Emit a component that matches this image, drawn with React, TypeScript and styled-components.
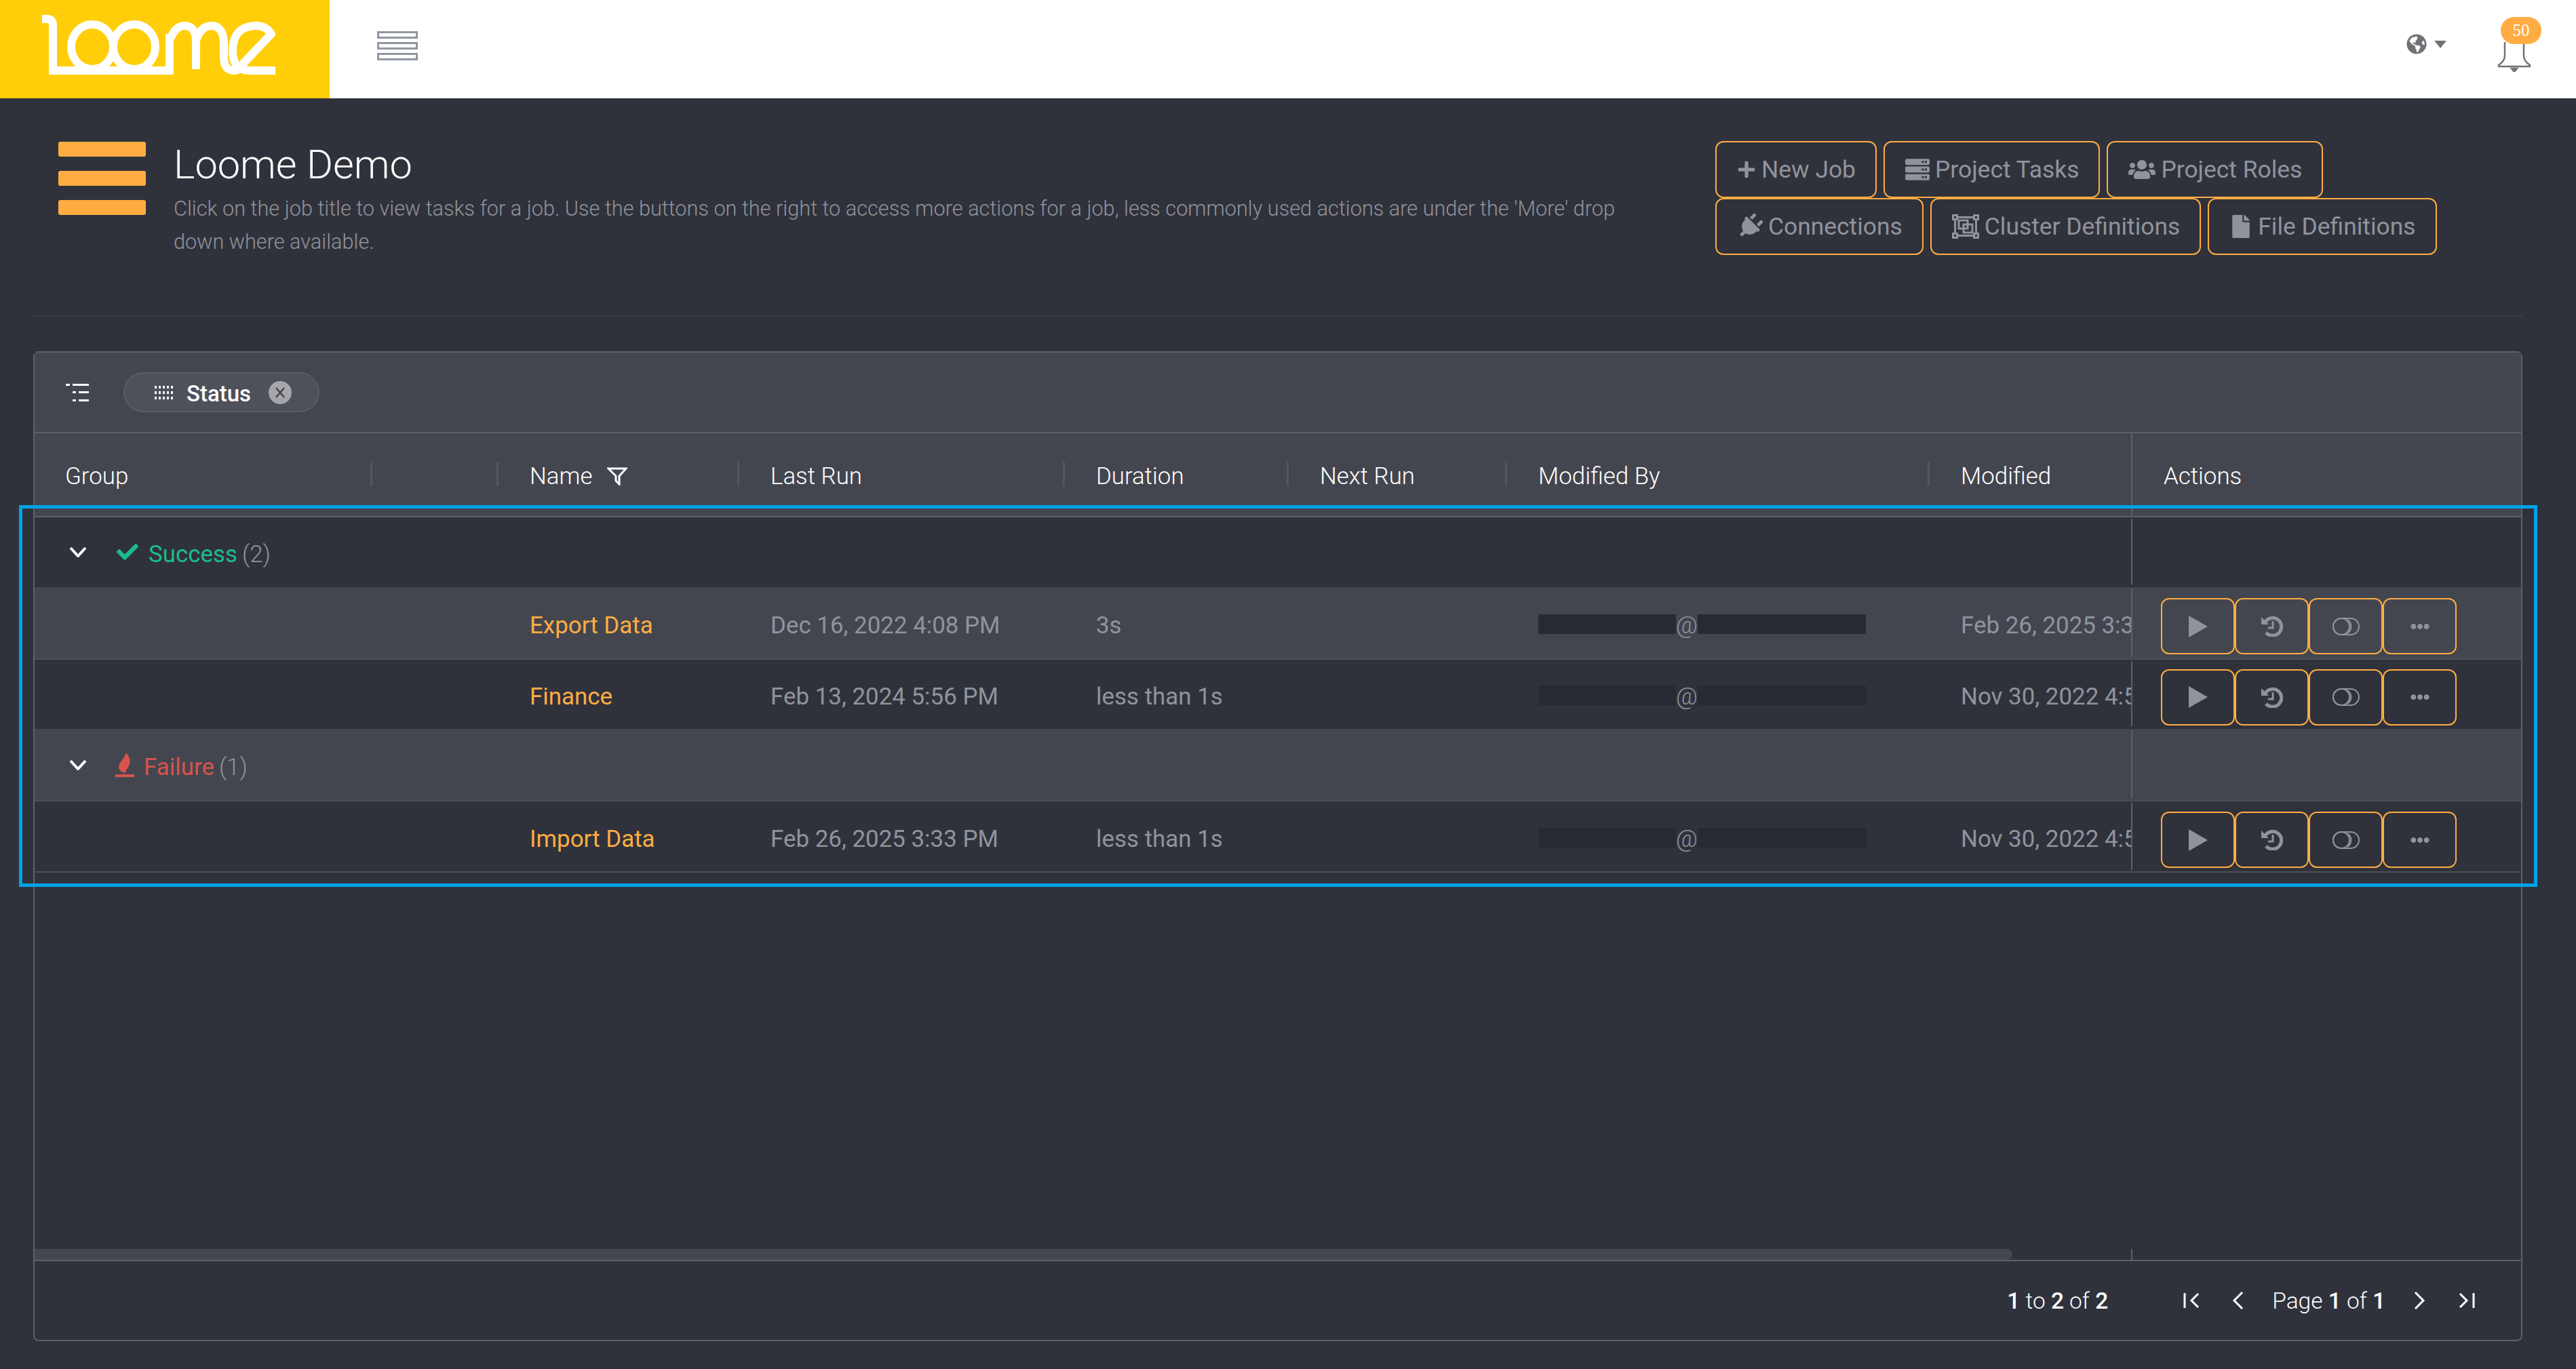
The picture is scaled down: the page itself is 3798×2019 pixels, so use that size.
import React, {FC} from "react";
import styled, {createGlobalStyle} from "styled-components";
import {
  FaPlus,
  FaServer,
  FaUsers,
  FaPlug,
  FaFile,
  FaGlobeAmericas,
  FaEllipsisH,
  FaCheck
} from "react-icons/fa";

const ORANGE = "#ffad43";
const DARK = "#30323b";
const LIGHT = "#44464f";
const LINE = "#5f6067";
const MUTED = "#8f949c";

const GlobalStyle = createGlobalStyle`
  html, body {
    margin: 0;
    padding: 0;
    background: ${DARK};
  }
  body {
    font-family: Roboto, "Liberation Sans", sans-serif;
    font-size: 34.9px;
    color: ${MUTED};
  }
  * {
    box-sizing: border-box;
  }
`;

const Page = styled.div`
  position: relative;
  width: 3798px;
  height: 2019px;
  overflow: hidden;
  background: ${DARK};
`;

/* top bar */
const TopBar = styled.header`
  display: flex;
  height: 145px;
  background: #fff;
`;

const LogoBox = styled.div`
  width: 486px;
  height: 145px;
  background: #ffce09;
`;

const MenuToggle = styled.svg`
  width: 60px;
  height: 43px;
  margin: 46px 0 0 70px;
`;

const TopRight = styled.div`
  display: flex;
  margin-left: auto;
  padding-right: 51px;
`;

const LocaleMenu = styled.div`
  display: flex;
  align-items: center;
  gap: 11px;
  height: 30px;
  margin-top: 50px;
  color: #6f7276;
  font-size: 30px;
`;

const Caret = styled.span`
  width: 0;
  height: 0;
  border-left: 9px solid transparent;
  border-right: 9px solid transparent;
  border-top: 11px solid #6f7276;
`;

const BellWrap = styled.div`
  position: relative;
  width: 65px;
  height: 50px;
  margin: 60px 0 0 75px;
`;

const Badge = styled.span`
  position: absolute;
  top: -35px;
  right: 0;
  width: 60px;
  height: 40px;
  border-radius: 20px;
  background: ${ORANGE};
  color: #fff;
  font-family: "Liberation Serif", serif;
  font-size: 25px;
  line-height: 40px;
  text-align: center;
`;

/* page heading */
const Heading = styled.section`
  display: flex;
  height: 322px;
  margin: 0 79px 0 49px;
  padding: 63px 0 0 37px;
  border-bottom: 2px solid #3a3c48;
`;

const BarsIcon = styled.div`
  display: flex;
  flex-direction: column;
  gap: 21px;
  width: 129px;
  margin-top: 1px;
`;

const Bar = styled.span`
  height: 22px;
  border-radius: 3px;
  background: ${ORANGE};
`;

const HeadingText = styled.div`
  width: 2172px;
  margin-left: 41px;
`;

const Title = styled.h1`
  margin: 0;
  color: #fff;
  font-size: 59.5px;
  font-weight: 300;
  line-height: 70px;
`;

const Description = styled.p`
  margin: 5px 0 0;
  color: #90939b;
  font-size: 30.7px;
  font-weight: 300;
  line-height: 49px;
`;

const ActionButtons = styled.div`
  display: flex;
  flex-wrap: wrap;
  align-content: flex-start;
  column-gap: 10px;
  width: 1100px;
  margin-left: 101px;
`;

const LinkButton = styled.button`
  display: flex;
  align-items: center;
  gap: 8px;
  height: 84px;
  padding: 0 29px 0 30px;
  border: 2.4px solid ${ORANGE};
  border-radius: 12px;
  background: transparent;
  color: ${MUTED};
  font-family: inherit;
  font-size: 35.4px;
  font-weight: 400;
  white-space: nowrap;

  svg {
    flex: none;
  }
`;

/* table */
const Panel = styled.section`
  display: flex;
  flex-direction: column;
  height: 1460px;
  margin: 51px 79px 0 49px;
  border: 2px solid ${LINE};
  border-radius: 8px;
`;

const Toolbar = styled.div`
  display: flex;
  align-items: center;
  gap: 51px;
  height: 119px;
  padding-left: 46px;
  background: ${LIGHT};
  border-bottom: 2px solid ${LINE};
`;

const GroupChip = styled.div`
  display: flex;
  align-items: center;
  width: 289px;
  height: 59px;
  padding-left: 44px;
  border: 2px solid #5a5c66;
  border-radius: 30px;
  background: #4e505a;
  color: #fff;
  font-size: 33px;
  font-weight: 500;
`;

const ChipLabel = styled.span`
  margin: 4px 26px 0 20px;
`;

const COLUMNS = "498px 186px 355px 480px 330px 322px 623px 297px 1fr";

const HeaderRow = styled.div`
  display: grid;
  grid-template-columns: ${COLUMNS};
  height: 124px;
  background: ${LIGHT};
  border-bottom: 2px solid ${LINE};
  color: #fff;
  font-weight: 300;
`;

const HeaderCell = styled.div<{$sep?: boolean; $pinned?: boolean}>`
  position: relative;
  display: flex;
  align-items: center;
  gap: 22px;
  padding: 4px 0 0 46px;
  border-left: ${p => (p.$pinned ? `2px solid ${LINE}` : "none")};

  &:first-child {
    padding-left: 45px;
  }

  &::after {
    content: "";
    display: ${p => (p.$sep ? "block" : "none")};
    position: absolute;
    top: 42px;
    right: 0;
    width: 3px;
    height: 36px;
    background: #55565d;
  }
`;

const Rows = styled.div`
  display: flex;
  flex: 1;
  flex-direction: column;
`;

const Row = styled.div<{$height: number; $light?: boolean; $ruled?: boolean}>`
  display: grid;
  grid-template-columns: ${COLUMNS};
  align-items: center;
  height: ${p => p.$height}px;
  background: ${p => (p.$light ? LIGHT : DARK)};
  border-bottom: 2px solid ${p => (p.$ruled ? "#4e4f57" : "transparent")};
`;

const GroupCell = styled.div`
  grid-column: 1 / 9;
  display: flex;
  align-items: center;
  padding-left: 51px;
`;

const GroupName = styled.span<{$color: string; $gap: number; $inset: number}>`
  display: flex;
  align-items: center;
  gap: ${p => p.$gap}px;
  margin-left: ${p => p.$inset}px;
  color: ${p => p.$color};
`;

const GroupLabel = styled.span`
  margin-top: 7px;
`;

const Count = styled.span`
  margin-left: 7px;
  font-weight: 300;
  color: ${MUTED};
`;

const Cell = styled.div`
  overflow: hidden;
  padding: 8px 0 0 46px;
  white-space: nowrap;
`;

const JobLink = styled(Cell)`
  color: ${ORANGE};
`;

const MaskedEmail = styled(Cell)`
  display: flex;
  align-items: center;
  font-weight: 300;
`;

const Mask = styled.span<{$width: number}>`
  width: ${p => p.$width}px;
  height: 29px;
  margin-top: -4px;
  background: #282a33;
`;

const PinnedCell = styled.div`
  display: flex;
  grid-column: 9;
  align-items: center;
  align-self: stretch;
  padding: 10px 0 0 42px;
  margin: 2px 0;
  border-left: 2px solid ${LINE};
`;

const IconButton = styled.button`
  display: flex;
  align-items: center;
  justify-content: center;
  width: 109px;
  height: 83px;
  padding: 0;
  border: 2.4px solid ${ORANGE};
  border-radius: 12px;
  background: transparent;
  color: ${MUTED};
`;

const ScrollBar = styled.div`
  display: grid;
  grid-template-columns: 3091px 1fr;
  height: 16px;
  margin-top: auto;
`;

const ScrollThumb = styled.div`
  width: 2916px;
  border-radius: 0 8px 8px 0;
  background: ${LIGHT};
`;

const ScrollPinned = styled.div`
  border-left: 2px solid ${LINE};
`;

const Footer = styled.footer`
  display: flex;
  align-items: center;
  justify-content: flex-end;
  height: 118px;
  padding: 0 68px 0 0;
  border-top: 2px solid ${LINE};
  color: #fff;
  font-size: 33.5px;
  font-weight: 300;
`;

const Summary = styled.span`
  margin-right: 111px;

  b {
    font-weight: 500;
  }
`;

const PageText = styled.span`
  margin: 0 42px 0 42px;

  b {
    font-weight: 500;
  }
`;

const PagerSvg = styled.svg<{$gap?: number}>`
  margin-right: ${p => p.$gap || 0}px;
`;

/* the blue frame someone drew over the screenshot */
const Highlight = styled.div`
  position: absolute;
  top: 745px;
  left: 28px;
  width: 3713px;
  height: 563px;
  border: 5px solid #00a2e8;
  pointer-events: none;
`;

const Logo: FC = () => (
  <svg width="486" height="145" viewBox="0 0 486 145" fill="none" stroke="#fff" strokeWidth="12">
    <path d="M62 28 H70 Q78 28 78 38 V104 H250 V50"/>
    <ellipse cx="136" cy="69" rx="31" ry="33"/>
    <ellipse cx="198" cy="69" rx="31" ry="33"/>
    <path d="M250 60 Q258 38 272 38 Q289 38 289 62 V102"/>
    <path
      d="M289 60 Q296 38 312 38 Q330 38 330 66 V84 Q330 104 345 104 Q354 104 360 92 L400 50 Q392 38 378 38 Q345 38 343 72 Q342 104 368 104 H406"
      strokeLinejoin="round"/>
  </svg>
);

const ClusterIcon: FC = () => (
  <svg width="40" height="36" viewBox="0 0 40 36" fill="none" stroke="currentColor" strokeWidth="3">
    <rect x="1.5" y="1.5" width="6" height="6"/>
    <rect x="32.5" y="1.5" width="6" height="6"/>
    <rect x="1.5" y="28.5" width="6" height="6"/>
    <rect x="32.5" y="28.5" width="6" height="6"/>
    <path d="M7.5 4.5H32.5M4.5 7.5V28.5M35.5 7.5V28.5M7.5 31.5H32.5"/>
    <rect x="10" y="9" width="13" height="12"/>
    <rect x="17" y="15" width="13" height="12"/>
  </svg>
);

const buttons: {label: string; icon: React.ReactNode}[] = [
  {label: "New Job", icon: <FaPlus size={28}/>},
  {label: "Project Tasks", icon: <FaServer size={36}/>},
  {label: "Project Roles", icon: <FaUsers size={40}/>},
  {label: "Connections", icon: <FaPlug size={38} style={{transform: "rotate(45deg)"}}/>},
  {label: "Cluster Definitions", icon: <ClusterIcon/>},
  {label: "File Definitions", icon: <FaFile size={34}/>}
];

const Chevron: FC = () => (
  <svg width="26" height="16" viewBox="0 0 26 16" fill="none" stroke="#fff" strokeWidth="4">
    <path d="M2 2 L13 14 L24 2"/>
  </svg>
);

const Flame: FC = () => (
  <svg width="28" height="36" viewBox="0 0 28 36" fill="#d9534f">
    <path d="M16 0 C20 5 23 11 21 17 C19 23 15 26 15 30 C8 29 5 25 5 21 C5 14 14 9 16 0Z"/>
    <rect x="0" y="32" width="28" height="4"/>
  </svg>
);

const FilterIcon: FC = () => (
  <svg width="30" height="27" viewBox="0 0 30 27" fill="none" stroke="#fff" strokeWidth="3">
    <path d="M2 2 H28 L18 13 V25 L13 20 V13 Z"/>
  </svg>
);

const PlayIcon: FC = () => (
  <svg width="28" height="32" viewBox="0 0 28 32" fill="currentColor">
    <path d="M0 0 L28 16 L0 32 Z"/>
  </svg>
);

const HistoryIcon: FC = () => (
  <svg width="32" height="31" viewBox="0 0 32 31" fill="none" stroke="currentColor" strokeWidth="5">
    <path d="M6 9 A13 13 0 1 1 7 25"/>
    <path d="M0 2 L0 13 L11 13 Z" fill="currentColor" stroke="none"/>
    <path d="M17 8 V18 H10" strokeWidth="3"/>
  </svg>
);

const ToggleIcon: FC = () => (
  <svg width="40" height="26" viewBox="0 0 40 26" fill="none" stroke="currentColor" strokeWidth="2">
    <rect x="1" y="1" width="38" height="24" rx="12"/>
    <circle cx="13" cy="13" r="12"/>
    <path d="M22 3 A 12 12 0 0 1 22 23"/>
  </svg>
);

type Job = {
  name: string;
  lastRun: string;
  duration: string;
  modified: string;
  height: number;
  light?: boolean;
  ruled?: boolean;
};

const jobRows: Job[] = [
  {
    name: "Export Data",
    lastRun: "Dec 16, 2022 4:08 PM",
    duration: "3s",
    modified: "Feb 26, 2025 3:33 PM",
    height: 107,
    light: true,
    ruled: true
  },
  {
    name: "Finance",
    lastRun: "Feb 13, 2024 5:56 PM",
    duration: "less than 1s",
    modified: "Nov 30, 2022 4:51 PM",
    height: 102
  }
];

const JobRow: FC<{job: Job}> = ({job}) => (
  <Row $height={job.height} $light={job.light} $ruled={job.ruled}>
    <Cell/>
    <Cell/>
    <JobLink>{job.name}</JobLink>
    <Cell>{job.lastRun}</Cell>
    <Cell>{job.duration}</Cell>
    <Cell/>
    <MaskedEmail>
      <Mask $width={203}/>@<Mask $width={248}/>
    </MaskedEmail>
    <Cell>{job.modified}</Cell>
    <PinnedCell>
      <IconButton><PlayIcon/></IconButton>
      <IconButton><HistoryIcon/></IconButton>
      <IconButton><ToggleIcon/></IconButton>
      <IconButton><FaEllipsisH size={28}/></IconButton>
    </PinnedCell>
  </Row>
);

const App: FC = () => (
  <Page>
    <GlobalStyle/>
    <TopBar>
      <LogoBox><Logo/></LogoBox>
      <MenuToggle viewBox="0 0 60 43" fill="none" stroke="#8f97a1" strokeWidth="3">
        <rect x="1.5" y="1.5" width="57" height="8"/>
        <rect x="1.5" y="17.5" width="57" height="8"/>
        <rect x="1.5" y="33.5" width="57" height="8"/>
      </MenuToggle>
      <TopRight>
        <LocaleMenu>
          <FaGlobeAmericas/>
          <Caret/>
        </LocaleMenu>
        <BellWrap>
          <svg width="50" height="46" viewBox="0 0 50 46" fill="none" stroke="#6f7276" strokeWidth="2.5">
            <path d="M11 2 V22 Q11 30 2 36 V38 H48 V36 Q39 30 39 22 V2"/>
            <path d="M21 41 H29 L25 46 Z" fill="#6f7276"/>
          </svg>
          <Badge>50</Badge>
        </BellWrap>
      </TopRight>
    </TopBar>

    <Heading>
      <BarsIcon><Bar/><Bar/><Bar/></BarsIcon>
      <HeadingText>
        <Title>Loome Demo</Title>
        <Description>
          Click on the job title to view tasks for a job. Use the buttons on the right to access more actions for a
          job, less commonly used actions are under the 'More' drop down where available.
        </Description>
      </HeadingText>
      <ActionButtons>
        {buttons.map(b => (
          <LinkButton key={b.label}>{b.icon}{b.label}</LinkButton>
        ))}
      </ActionButtons>
    </Heading>

    <Panel>
      <Toolbar>
        <svg width="34" height="26" viewBox="0 0 34 26" fill="#fff">
          <rect x="0" y="0" width="6" height="3"/>
          <rect x="10" y="0" width="24" height="3"/>
          <rect x="10" y="11" width="5" height="3"/>
          <rect x="19" y="11" width="15" height="3"/>
          <rect x="10" y="23" width="5" height="3"/>
          <rect x="19" y="23" width="15" height="3"/>
        </svg>
        <GroupChip>
          <svg width="27" height="20" viewBox="0 0 27 20" fill="#fff">
            {[0, 6, 12, 18, 24].map(x =>
              [0, 8, 16].map(y => <rect key={`${x}-${y}`} x={x} y={y} width="3" height="4"/>)
            )}
          </svg>
          <ChipLabel>Status</ChipLabel>
          <svg width="34" height="34" viewBox="0 0 34 34">
            <circle cx="17" cy="17" r="17" fill="#a5a6ab"/>
            <path d="M11 10 L23 24 M23 10 L11 24" stroke="#44464f" strokeWidth="2.5"/>
          </svg>
        </GroupChip>
      </Toolbar>

      <HeaderRow>
        <HeaderCell $sep>Group</HeaderCell>
        <HeaderCell $sep/>
        <HeaderCell $sep>Name <FilterIcon/></HeaderCell>
        <HeaderCell $sep>Last Run</HeaderCell>
        <HeaderCell $sep>Duration</HeaderCell>
        <HeaderCell $sep>Next Run</HeaderCell>
        <HeaderCell $sep>Modified By</HeaderCell>
        <HeaderCell>Modified</HeaderCell>
        <HeaderCell $pinned>Actions</HeaderCell>
      </HeaderRow>

      <Rows>
        <Row $height={103}>
          <GroupCell>
            <Chevron/>
            <GroupName $color="#1abc8a" $gap={15} $inset={44}>
              <FaCheck size={32}/>
              <GroupLabel>Success<Count>(2)</Count></GroupLabel>
            </GroupName>
          </GroupCell>
          <PinnedCell/>
        </Row>
        {jobRows.map(job => <JobRow key={job.name} job={job}/>)}
        <Row $height={107} $light $ruled>
          <GroupCell>
            <Chevron/>
            <GroupName $color="#d9534f" $gap={14} $inset={42}>
              <Flame/>
              <GroupLabel>Failure<Count>(1)</Count></GroupLabel>
            </GroupName>
          </GroupCell>
          <PinnedCell/>
        </Row>
        <JobRow
          job={{
            name: "Import Data",
            lastRun: "Feb 26, 2025 3:33 PM",
            duration: "less than 1s",
            modified: "Nov 30, 2022 4:51 PM",
            height: 105,
            ruled: true
          }}
        />
        <ScrollBar>
          <ScrollThumb/>
          <ScrollPinned/>
        </ScrollBar>
      </Rows>

      <Footer>
        <Summary><b>1</b> to <b>2</b> of <b>2</b></Summary>
        <PagerSvg $gap={48} width="24" height="22" viewBox="0 0 24 22" fill="none" stroke="#fff" strokeWidth="3">
          <path d="M2 0 V22 M22 1 L12 11 L22 21"/>
        </PagerSvg>
        <PagerSvg width="17" height="26" viewBox="0 0 17 26" fill="none" stroke="#fff" strokeWidth="3">
          <path d="M15 1 L3 13 L15 25"/>
        </PagerSvg>
        <PageText>Page <b>1</b> of <b>1</b></PageText>
        <PagerSvg $gap={49} width="17" height="26" viewBox="0 0 17 26" fill="none" stroke="#fff" strokeWidth="3">
          <path d="M2 1 L14 13 L2 25"/>
        </PagerSvg>
        <PagerSvg width="24" height="22" viewBox="0 0 24 22" fill="none" stroke="#fff" strokeWidth="3">
          <path d="M22 0 V22 M2 1 L12 11 L2 21"/>
        </PagerSvg>
      </Footer>
    </Panel>

    <Highlight/>
  </Page>
);

export default App;
